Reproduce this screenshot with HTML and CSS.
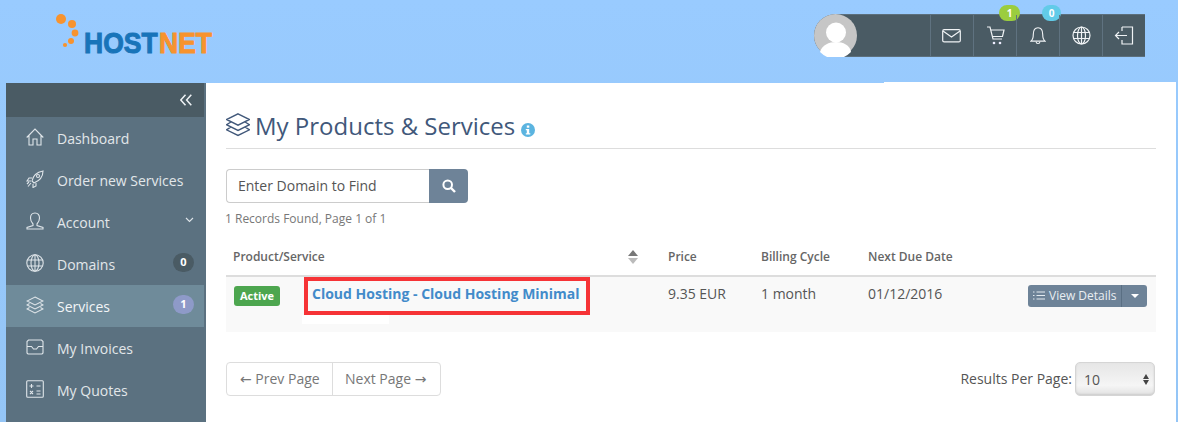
FILE: index.html
```html
<!DOCTYPE html>
<html lang="en">
<head>
<meta charset="utf-8">
<title>My Products &amp; Services</title>
<link rel="stylesheet" href="styles.css">
</head>
<body>
<header class="topbar">
  <svg class="logo" width="160" height="50" viewBox="0 0 160 50">
    <g fill="#f7932e"><circle cx="6" cy="6" r="5"/><circle cx="17" cy="11" r="4"/><circle cx="20" cy="20" r="3.4"/><circle cx="16" cy="28" r="3"/><circle cx="10" cy="32" r="2.100"/></g>
    <text class="logo-text logo-blue" transform="translate(29 40) scale(1 1.14)">HOST</text>
    <text class="logo-text logo-orange" transform="translate(104 40) scale(1 1.14)">NET</text>
  </svg>
  <div class="userbar">
    <svg class="avatar" width="43" height="43" viewBox="0 0 43 43"><circle cx="21.500" cy="21.500" r="21.500" fill="#c6c6c6"/><circle cx="22" cy="18.500" r="10" fill="#fff"/><path d="M6 38c2-7 9-10 16-10s14 3 15 10a21.500 21.500 0 0 1-31 0z" fill="#fff"/></svg>
    <div class="userspace"></div>
    <div class="ub-cell"><svg width="20" height="14" viewBox="0 0 20 14"><rect x=".7" y=".7" width="17.600" height="12.200" rx="1.500" class="ln"/><path d="M1 2l8.500 6L18 2" class="ln"/></svg></div>
    <div class="ub-cell"><svg width="19" height="19" viewBox="0 0 19 19"><path d="M1 1h3l3 12h9M4.500 4H18l-1.500 6.500H6" class="ln"/><circle cx="8" cy="17" r="1.300" fill="#eef"/><circle cx="14" cy="17" r="1.300" fill="#eef"/></svg><span class="ub-badge ub-green">1</span></div>
    <div class="ub-cell"><svg class="bell" width="16" height="20" viewBox="0 0 17 20"><path d="M1 15.500c2-1.500 2.500-3 2.500-7C3.500 4 5.500 1.200 8.500 1.200s5 2.800 5 7.300c0 4 .5 5.500 2.500 7z" class="ln"/><path d="M6.500 16a2 2 0 0 0 4 0" class="ln"/></svg><span class="ub-badge ub-cyan">0</span></div>
    <div class="ub-cell"><svg width="19" height="19" viewBox="0 0 19 19"><circle cx="9.500" cy="9.500" r="8.500" class="ln"/><ellipse cx="9.500" cy="9.500" rx="4" ry="8.500" class="ln"/><path d="M9.500 1v17M1.500 6.500h16M1.500 12.500h16" class="ln"/></svg></div>
    <div class="ub-cell"><svg width="20" height="19" viewBox="0 0 20 19"><path d="M8 1h10.500v17H8v-4M8 5V1" class="ln"/><path d="M13 9.500H1.500M5 6L1.500 9.500 5 13" class="ln"/></svg></div>
  </div>
</header>
<div class="layout">
  <nav class="sidebar">
    <div class="side-head"><svg width="12" height="12" viewBox="0 0 12 12"><path d="M5.500 .7L.8 6l4.700 5.300M11.300 .7L6.600 6l4.700 5.300" class="ln2"/></svg></div>
    <a class="item"><svg class="ico" width="18" height="18" viewBox="0 0 18 18"><path d="M.7 9.500L9 1l8.300 8.500M3 7.500V17h4v-6h4v6h4V7.500" class="ln3"/></svg><span>Dashboard</span></a>
    <a class="item"><svg class="ico" width="18" height="18" viewBox="0 0 18 18"><path d="M6 11c1-5 5-9 11-10 0 6-4 10-9 12zM6 8H3L1 11h4M10 13v3l-3 1.500V14M5 13l-3 3.500M3 12l-2 2" class="ln3"/><circle cx="12" cy="6" r="1.500" class="ln3"/></svg><span>Order new Services</span></a>
    <a class="item"><svg class="ico" width="18" height="18" viewBox="0 0 18 18"><path d="M9 1c-3 0-4.500 2-4.500 5s1.500 5 2.500 6v1.500L1 15.500V17h16v-1.500L11 13.500V12c1-1 2.500-3 2.500-6S12 1 9 1z" class="ln3"/></svg><span>Account</span><svg class="chev" width="9" height="6" viewBox="0 0 9 6"><path d="M1 1l3.500 3.500L8 1" class="ln3"/></svg></a>
    <a class="item"><svg class="ico" width="18" height="18" viewBox="0 0 18 18"><circle cx="9" cy="9" r="8.200" class="ln3"/><ellipse cx="9" cy="9" rx="4" ry="8.200" class="ln3"/><path d="M9 1v16M1.500 6h15M1.500 12h15" class="ln3"/></svg><span>Domains</span><b class="count count-dark">0</b></a>
    <a class="item item-active"><svg class="ico" width="18" height="18" viewBox="0 0 18 18"><path d="M9 1l8 4-8 4-8-4zM3.500 7.500L1 9l8 4 8-4-2.500-1.500M3.500 11.500L1 13l8 4 8-4-2.500-1.500" class="ln3"/></svg><span>Services</span><b class="count count-blue">1</b></a>
    <a class="item"><svg class="ico" width="18" height="16" viewBox="0 0 18 16"><path d="M1 9V2.500L2.500 1h13L17 2.500V9M1 7.500h4.500L7.500 10h3l2-2.500H17V14l-1 1H2l-1-1z" class="ln3"/></svg><span>My Invoices</span></a>
    <a class="item"><svg class="ico" width="18" height="18" viewBox="0 0 18 18"><rect x=".7" y=".7" width="16.600" height="16.600" rx="1" class="ln3"/><path d="M3.500 6h4M5.500 4v4M10.500 6h4M4 11l3 3M7 11l-3 3M10.500 11h4M10.500 14h4" class="ln3"/></svg><span>My Quotes</span></a>
    <a class="item"><svg class="ico" width="18" height="18" viewBox="0 0 18 18"><circle cx="9" cy="9" r="8.200" class="ln3"/></svg></a>
  </nav>
  <main class="content">
    <h1 class="title">
      <svg width="24" height="24" viewBox="0 0 24 24"><path d="M12 .8L23.500 6.500 12 12.200 .5 6.500zM5 9L.5 11.700 12 17.400l11.500-5.700L19 9M5 14L.5 16.800 12 22.500l11.500-5.700L19 14" fill="none" stroke="#41587a" stroke-width="1.400"/></svg>
      <span>My Products &amp; Services</span>
      <svg class="info" width="14" height="14" viewBox="0 0 14 14"><circle cx="7" cy="7" r="7" fill="#5bb4e0"/><rect x="5.800" y="2.500" width="2.500" height="2.200" fill="#fff"/><path d="M4.800 6h3.400v4.200h1.100v1.300H4.800v-1.300h1V7.300h-1z" fill="#fff"/></svg>
    </h1>
    <form class="search">
      <div class="search-input">Enter Domain to Find</div>
      <div class="search-btn"><svg width="14" height="14" viewBox="0 0 14 14"><circle cx="5.700" cy="5.700" r="4.300" fill="none" stroke="#fff" stroke-width="2"/><path d="M9 9l4 4" stroke="#fff" stroke-width="2.400"/></svg></div>
    </form>
    <p class="records">1 Records Found, Page 1 of 1</p>
    <table class="table">
      <colgroup><col class="c1"><col class="c2"><col class="c3"><col class="c4"><col class="c5"></colgroup>
      <thead>
        <tr>
          <th><div class="th-prod"><span>Product/Service</span><span class="sort"><i class="up"></i><i class="down"></i></span></div></th>
          <th>Price</th>
          <th>Billing Cycle</th>
          <th>Next Due Date</th>
          <th></th>
        </tr>
      </thead>
      <tbody>
        <tr>
          <td class="prod">
            <div class="prod-row">
              <span class="label">Active</span>
              <div class="prod-name"><a class="link">Cloud Hosting - Cloud Hosting Minimal</a><div class="patch"></div></div>
            </div>
          </td>
          <td>9.35 EUR</td>
          <td>1 month</td>
          <td>01/12/2016</td>
          <td class="actions">
            <div class="btn-group">
              <span class="btn-main"><svg width="12" height="9" viewBox="0 0 12 9"><path d="M3.500 1H12M3.500 4.500H12M3.500 8H12M0 1h1.500M0 4.500h1.500M0 8h1.500" stroke="#e4eaf0" stroke-width="1"/></svg>View Details</span>
              <span class="btn-caret"><i></i></span>
            </div>
          </td>
        </tr>
      </tbody>
    </table>
    <div class="footer-row">
      <div class="pager"><span class="page page-prev">← Prev Page</span><span class="page page-next">Next Page →</span></div>
      <div class="perpage"><span>Results Per Page:</span>
        <div class="select"><span>10</span><span class="sel-arrows"><i class="up"></i><i class="down"></i></span></div>
      </div>
    </div>
  </main>
</div>
</body>
</html>
```
FILE: styles.css
```css
* { box-sizing: border-box; }
html, body { height: 100%; }
body {
  margin: 0;
  height: 422px;
  overflow: hidden;
  font-family: "Open Sans", sans-serif;
  font-size: 14px;
  color: #555;
  background: linear-gradient(180deg, #99cbff 0%, #94c5f6 100%);
}
.ln { fill: none; stroke: #f0f3f5; stroke-width: 1.2; }
.ln2 { fill: none; stroke: #eef2f5; stroke-width: 1.5; }
.ln3 { fill: none; stroke: #dfe5e9; stroke-width: 1.1; }

.topbar { height: 83px; display: flex; align-items: flex-start; padding: 13px 33px 0 55px; justify-content: space-between; }
.logo { display: block; }
.logo-text { font-family: "Liberation Sans", sans-serif; font-weight: 700; font-size: 26.5px; stroke-width: .9; }
.logo-blue { fill: #1874b9; stroke: #1874b9; }
.logo-orange { fill: #f7932e; stroke: #f7932e; }

.userbar { margin-top: 1px; width: 331px; height: 43px; background: #4a5b64; display: flex; border-bottom: 1px solid #5c6f7c; border-top: 1px solid #5c6f7c; border-radius: 22px 0 0 22px; position: relative; align-items: stretch; }
.avatar { display: block; margin-top: -1px; flex: none; }
.userspace { flex: 1; }
.ub-cell { width: 43px; flex: none; border-left: 1px solid #5f7280; display: flex; align-items: center; justify-content: center; position: relative; }
.bell { margin-right: 1px; }
.ub-badge { position: absolute; top: -10px; height: 16px; border-radius: 8px; color: #fff; font-size: 10px; font-weight: 700; line-height: 16px; text-align: center; }
.ub-green { background: #9bcd3e; width: 21px; left: 25px; }
.ub-cyan { background: #62cbe8; width: 19px; left: 25px; }

.layout { display: flex; margin-left: 6px; margin-right: 2px; height: 339px; }
.sidebar { width: 200px; flex: none; background: #5b7180; border-right: 2px solid #5b7180; overflow: hidden; }
.side-head { height: 34px; background: #4a5b64; display: flex; align-items: center; justify-content: flex-end; padding-right: 12px; }
.item { height: 42px; display: flex; align-items: center; padding: 0 11px 0 20px; color: #e2e7ea; position: relative; }
.item span { line-height: 42px; margin-top: 2px; }
.item .ico { flex: none; margin-right: 13px; margin-top: -2px; width: 18px; }
.item-active { background: #6f8b9a; color: #f2f5f7; }
.chev { position: absolute; left: 179px; top: 16px; }
.count { position: absolute; right: 10px; top: 10px; width: 21px; height: 19px; border-radius: 10px; color: #fff; font-size: 11px; font-weight: 700; line-height: 18px; text-align: center; }
.count-dark { background: #4a5b64; }
.count-blue { background: #8e9ac8; }

.content { flex: 1; background: #fff; padding: 0 20px; min-width: 0; position: relative; }
.content::before { content: ""; position: absolute; left: 678px; right: 0; top: -1px; height: 1px; background: #fff; }
.title { margin: 0; height: 66px; padding-top: 28px; border-bottom: 1px solid #ddd; display: flex; align-items: flex-start; font-size: 24px; font-weight: 400; color: #41587a; line-height: 30px; }
.title svg { flex: none; margin-top: 2px; margin-right: 6px; }
.title .info { margin: 12px 0 0 6px; }
.title span { margin-left: -1px; }

.search { display: flex; margin: 20px 0 0; height: 34px; width: 242px; }
.search-input { width: 203px; border: 1px solid #ccc; border-right: 0; border-radius: 4px 0 0 4px; padding-left: 11px; line-height: 32px; color: #555; }
.search-btn { width: 39px; background: #6e8398; border-radius: 0 4px 4px 0; display: flex; align-items: center; justify-content: center; }
.records { margin: 7px 0 0 -1px; font-size: 12px; line-height: 17px; color: #777; }

.table { border-collapse: collapse; width: 930px; table-layout: fixed; margin-top: 11px; }
.c1 { width: 434px; } .c2 { width: 93px; } .c3 { width: 107px; } .c4 { width: 160px; } .c5 { width: 136px; }
.table th { height: 38px; border-bottom: 2px solid #ddd; padding: 0 8px; text-align: left; font-size: 12px; font-weight: 600; color: #666; }
.th-prod { display: flex; justify-content: space-between; align-items: center; padding-right: 14px; margin-left: -1px; }
.sort, .sel-arrows { display: flex; flex-direction: column; gap: 2px; }
.up, .down { display: block; width: 0; height: 0; border-left: 5px solid transparent; border-right: 5px solid transparent; }
.sort .up { border-bottom: 6px solid #777; }
.sort .down { border-top: 6px solid #bbb; }
.table td { height: 56px; background: #f9f9f9; padding: 0 8px 22px; font-size: 14px; color: #555; vertical-align: middle; }
.table td.prod { padding: 0; vertical-align: top; }
.prod-row { display: flex; align-items: flex-start; }
.label { margin: 9px 0 0 8px; width: 46px; height: 20px; background: #4da64f; border-radius: 3px; color: #fff; font-size: 11px; font-weight: 700; line-height: 20px; text-align: center; flex: none; }
.prod-name { margin-left: 24px; position: relative; }
.link { display: block; width: 286px; height: 38px; border: 4px solid #f63336; padding-left: 4px; font-weight: 700; color: #428bca; font-size: 14px; line-height: 26px; white-space: nowrap; }
.patch { position: absolute; left: -2px; top: 38px; width: 87px; height: 9px; background: #fff; }
.actions { text-align: right; }
.table td.actions { padding: 0 9px 18px 0; }
.btn-group { display: inline-flex; height: 22px; width: 119px; background: #6e8398; border-radius: 3px; color: #e9eef2; font-size: 12px; line-height: 21px; text-align: left; }
.btn-main { flex: none; display: flex; align-items: center; padding-left: 5px; width: 94px; border-right: 1px solid #5a6f83; white-space: nowrap; }
.btn-main svg { margin-right: 4px; flex: none; }
.btn-caret { flex: 1; display: flex; align-items: center; justify-content: center; }
.btn-caret i { width: 0; height: 0; border-left: 4px solid transparent; border-right: 4px solid transparent; border-top: 4px solid #fff; }

.footer-row { display: flex; justify-content: space-between; margin-top: 30px; padding-right: 1px; }
.pager { display: flex; height: 34px; border: 1px solid #ddd; border-radius: 4px; color: #777; font-family: "Open Sans", "DejaVu Sans", sans-serif; }
.page { line-height: 32px; padding-left: 13px; white-space: nowrap; }
.page-prev { width: 105px; }
.page-next { width: 108px; border-left: 1px solid #ddd; padding-left: 12px; }
.perpage { display: flex; align-items: center; gap: 3px; color: #555; }
.perpage > span { margin-top: -1px; }
.select { width: 80px; height: 34px; border: 1px solid #d5d5d5; border-radius: 5px; background: linear-gradient(180deg, #e6e6e6, #f5f5f5 70%, #e2e2e2); box-shadow: inset 0 -1px 2px #ccc; display: flex; align-items: center; justify-content: space-between; padding: 0 5px 0 8px; color: #555; }
.sel-arrows { gap: 1px; }
.sel-arrows .up { border-left-width: 3px; border-right-width: 3px; border-bottom: 5px solid #444; }
.sel-arrows .down { border-left-width: 3px; border-right-width: 3px; border-top: 5px solid #444; }
```
